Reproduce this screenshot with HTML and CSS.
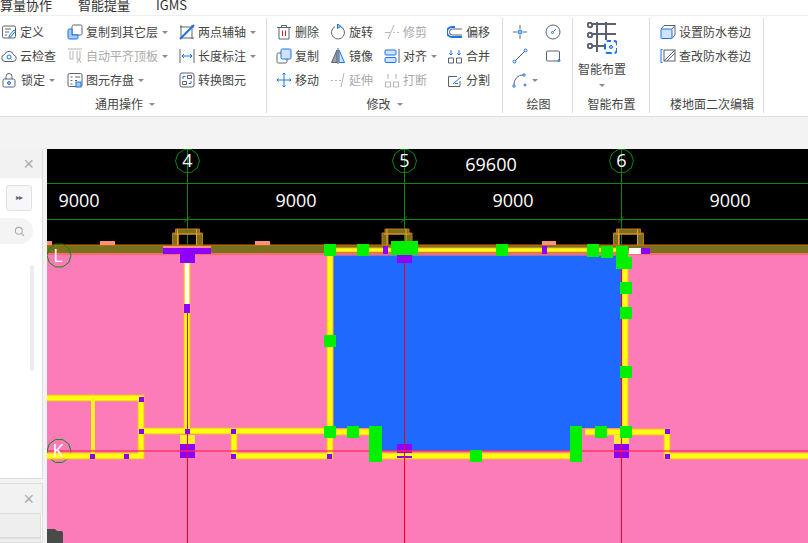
FILE: index.html
```html
<!DOCTYPE html>
<html lang="zh">
<head>
<meta charset="utf-8">
<title>IGMS</title>
<link rel="stylesheet" href="styles.css">
</head>
<body>
<header class="tabs"><span>算量协作</span><span>智能提量</span><span>IGMS</span></header>
<section class="ribbon">
  <div class="group g1">
    <div class="grid">
      <div class="tool"><svg class="ic" viewBox="0 0 16 16"><rect x="1.5" y="2" width="13" height="12" rx="1.5"/><path d="M4 5h6M4 8h4M4 11h2"/><path class="b" d="M8 12l5-6 1.5 1.2-5 6H8z"/></svg><span>定义</span></div>
      <div class="tool"><svg class="ic" viewBox="0 0 16 16"><rect x="5" y="1" width="10" height="10" rx="1.5"/><path class="fb" d="M1 6.5a1.5 1.5 0 0 1 1.500-1.500H5v6h6v2.500a1.500 1.500 0 0 1-1.500 1.500h-7A1.500 1.500 0 0 1 1 13.500z"/></svg><span>复制到其它层</span><i class="caret"></i></div>
      <div class="tool"><svg class="ic" viewBox="0 0 16 16"><path d="M2 1v13h13M1 3h14M13 1v14"/><path class="b thick" d="M1 15L15 1"/></svg><span>两点辅轴</span><i class="caret"></i></div>
      <div class="tool"><svg class="ic" viewBox="0 0 16 16"><path d="M4 13.500a3.500 3.500 0 0 1-.500-6.900 4.800 4.800 0 0 1 9.200 0.400A3.300 3.300 0 0 1 12 13.500z"/><circle class="b" cx="8" cy="9" r="2"/><path class="b" d="M9.500 10.500l1 1"/></svg><span>云检查</span></div>
      <div class="tool off"><svg class="ic" viewBox="0 0 16 16"><path d="M1 1h14M3 3v8h3V3M10 3v8h3V3"/><path d="M10 15l2-4 2 4"/></svg><span>自动平齐顶板</span><i class="caret"></i></div>
      <div class="tool"><svg class="ic" viewBox="0 0 16 16"><path d="M1 1v14"/><path class="b" d="M3 8h10M3 8l2-2M3 8l2 2M13 8l-2-2M13 8l-2 2"/><path d="M15 1v14"/></svg><span>长度标注</span><i class="caret"></i></div>
      <div class="tool"><svg class="ic" viewBox="0 0 16 16"><path d="M5 7V4.500a3 3 0 0 1 6 0V7"/><rect x="2" y="7" width="12" height="8" rx="1.500"/><circle class="fb" cx="8" cy="11" r="1.500"/></svg><span class="nudge">锁定</span><i class="caret"></i></div>
      <div class="tool"><svg class="ic" viewBox="0 0 16 16"><rect x="1" y="1.500" width="14" height="13" rx="1.500"/><path d="M3.500 5h2M8 5h5M3.500 8.500h2M8 8.500h2M3.500 12h2"/><rect class="fb" x="9" y="10" width="5" height="5"/></svg><span>图元存盘</span><i class="caret"></i></div>
      <div class="tool"><svg class="ic" viewBox="0 0 16 16"><rect x="1" y="1" width="14" height="14" rx="2"/><path d="M8.500 3.500h4v3h-4z"/><path d="M3.500 9.500h4v3h-4z"/><path class="b" d="M4 7V4.500h2.500M12 9v2.500H9.500"/></svg><span>转换图元</span></div>
    </div>
    <div class="label">通用操作<i class="caret wide"></i></div>
  </div>
  <div class="group g2">
    <div class="grid">
      <div class="tool"><svg class="ic" viewBox="0 0 16 16"><path d="M1 3.500h14M5.500 3.500V1.500h5v2M3 3.500V15h10V3.500"/><path class="r" d="M6.500 6.500v5.500M9.500 6.500v5.500"/></svg><span>删除</span></div>
      <div class="tool"><svg class="ic" viewBox="0 0 16 16"><path d="M10 2.300A6.500 6.500 0 1 1 5 2.700"/><path class="fb" d="M7.500 0v4.500L11 2.300z"/></svg><span>旋转</span></div>
      <div class="tool off"><svg class="ic" viewBox="0 0 16 16"><path d="M1 8.500h5M9.500 8.500h1.500M13 8.500h2M4 15L10 1"/></svg><span>修剪</span></div>
      <div class="tool"><svg class="ic" viewBox="0 0 16 16"><path class="b thick" d="M8 3H5a5 5 0 0 0 0 10h10"/><path d="M15 5H5.500a3 3 0 0 0 0 6H15"/></svg><span>偏移</span></div>
      <div class="tool"><svg class="ic" viewBox="0 0 16 16"><rect class="lb" x="5" y="1" width="10" height="10" rx="1.500"/><path d="M5 5H2.500A1.500 1.500 0 0 0 1 6.500v7A1.500 1.500 0 0 0 2.500 15h7a1.500 1.500 0 0 0 1.500-1.500V11"/></svg><span>复制</span></div>
      <div class="tool"><svg class="ic" viewBox="0 0 16 16"><path class="g" d="M7 2L1.500 14.500H7z"/><path class="lb" d="M9 2l5.500 12.500H9z"/><path d="M8 0v16"/></svg><span>镜像</span></div>
      <div class="tool align"><svg class="ic" viewBox="0 0 16 16"><rect class="lb" x="1" y="2" width="11" height="5" rx="1"/><rect class="lb" x="1" y="9.500" width="11" height="5" rx="1"/><path d="M15 1v14"/></svg><span>对齐</span><i class="caret"></i></div>
      <div class="tool"><svg class="ic" viewBox="0 0 16 16"><path d="M1.500 10h5v5h-5zM9.500 10h5v5h-5z"/><path class="b" d="M4 2v5M2.500 5.500L4 7l1.500-1.500M12 2v5M10.500 5.500L12 7l1.500-1.500"/></svg><span>合并</span></div>
      <div class="tool"><svg class="ic" viewBox="0 0 16 16"><path class="b" d="M8 1v14M1 8h14M6.500 2.500L8 1l1.500 1.500M6.500 13.500L8 15l1.500-1.500M2.500 6.500L1 8l1.500 1.500M13.500 6.500L15 8l-1.500 1.500"/></svg><span>移动</span></div>
      <div class="tool off"><svg class="ic" viewBox="0 0 16 16"><path d="M1 8.500h2M5 8.500h2M9 8.500h2M11 15l3-14"/></svg><span>延伸</span></div>
      <div class="tool off"><svg class="ic" viewBox="0 0 16 16"><path d="M1.500 10h5v5h-5zM9.500 10h5v5h-5zM4 2v5M12 2v5"/></svg><span>打断</span></div>
      <div class="tool"><svg class="ic" viewBox="0 0 16 16"><path d="M13 9v5.500H1.500V4.500H10"/><path class="b" d="M6 12l8-7M11 11.500h-3"/></svg><span>分割</span></div>
    </div>
    <div class="label">修改<i class="caret wide"></i></div>
  </div>
  <div class="group g3">
    <div class="grid">
      <div class="tool"><svg class="ic" viewBox="0 0 16 16"><path d="M1 8h4M11 8h4M8 1v4M8 11v4"/><circle class="fb" cx="8" cy="8" r="2"/></svg></div>
      <div class="tool"><svg class="ic" viewBox="0 0 16 16"><circle cx="8" cy="8" r="7"/><circle class="b" cx="7.500" cy="8.500" r="1"/><path class="b" d="M8.500 7.500L11 5"/></svg></div>
      <div class="tool"><svg class="ic" viewBox="0 0 16 16"><path d="M3 13L13 3"/><circle class="b" cx="2.500" cy="13.500" r="1.500"/><circle class="b" cx="13.500" cy="2.500" r="1.500"/></svg></div>
      <div class="tool"><svg class="ic" viewBox="0 0 16 16"><rect x="1.500" y="3" width="13" height="10" rx="1"/><circle class="b" cx="14" cy="12.500" r="1"/></svg></div>
      <div class="tool"><svg class="ic" viewBox="0 0 16 16"><path d="M2 13C2 7 6 3 11 3"/><circle class="b" cx="2" cy="14" r="1.200"/><circle class="b" cx="12" cy="3" r="1.200"/><circle class="b" cx="13" cy="13" r="1"/></svg><i class="caret"></i></div>
    </div>
    <div class="label">绘图</div>
  </div>
  <div class="group g4">
    <div class="big">
      <svg class="ic large" viewBox="0 0 30 32"><path class="thick" d="M5 2h24M5 12h24M5 24h12M10 0v30M19 0v18"/><circle class="thick w" cx="3" cy="3" r="2.200"/><circle class="thick w" cx="3" cy="13" r="2.200"/><circle class="thick w" cx="3" cy="24" r="2.200"/><rect class="b dash" x="18" y="19" width="12" height="12" rx="3"/><circle class="fb" cx="24" cy="25" r="1.500"/></svg>
      <span>智能布置</span>
      <i class="caret"></i>
    </div>
    <div class="label">智能布置</div>
  </div>
  <div class="group g5">
    <div class="stack">
      <div class="tool"><svg class="ic" viewBox="0 0 16 16"><path d="M1 5l3-3.500h11V11l-3 3.500"/><path d="M12 5l3-3.500"/><rect class="lb" x="1" y="5" width="11" height="9.500" rx="1"/></svg><span>设置防水卷边</span></div>
      <div class="tool"><svg class="ic" viewBox="0 0 16 16"><path class="b" d="M2.500 1.500H1v13h1.500"/><rect x="4" y="2" width="11" height="11"/><path d="M4 13L15 2M7 13l8-8"/></svg><span>查改防水卷边</span></div>
    </div>
    <div class="label">楼地面二次编辑</div>
  </div>
</section>
<div class="strip"></div>
<main class="work">
  <aside class="side">
    <div class="panel top-panel">
      <div class="phead"><span class="close">×</span></div>
      <div class="expand">▸▸</div>
      <div class="search"><svg class="ic search-ic" viewBox="0 0 16 16"><circle cx="7" cy="7" r="5"/><path d="M11 11l3.500 3.500"/></svg></div>
      <div class="scroll"></div>
    </div>
    <div class="panel low-panel">
      <div class="phead"><span class="close">×</span></div>
      <div class="row"></div>
      <div class="row"></div>
    </div>
  </aside>
  <svg class="canvas" viewBox="47 149 761 394">
    <defs>
      <polygon id="oct" points="12,0 9.700,7 3.700,11.400 -3.700,11.400 -9.700,7 -12,0 -9.700,-7 -3.700,-11.400 3.700,-11.400 9.700,-7"/>
      <g id="frame">
        <path class="frame-out" d="M-15 17v-12h3v-4h24v4h3v12h-6v-11h-18v11z"/>
        <path class="frame-in" d="M-10 1v16M9 1v16M-13 6h26"/>
      </g>
      <path id="wallpath" d="M330 250V456H234V431H141M47 456H141V398H47M141 431H330M187 262V431M625 250V432H667V456H808M570 456H382M330 432H370M585 432H625M404 456H570"/>
    </defs>
    <rect class="black" x="47" y="149" width="761" height="96"/>
    <rect class="pink" x="47" y="254" width="761" height="289"/>
    <rect class="olive" x="47" y="245" width="761" height="8.500"/>
    <path class="orange-l" d="M47 245H808"/>
    <path class="red-l" d="M47 254H808"/>
    <rect class="salmon" x="47" y="241" width="5" height="4"/>
    <rect class="salmon" x="100" y="241" width="15" height="4"/>
    <rect class="salmon" x="255" y="241" width="15" height="4"/>
    <rect class="salmon" x="542" y="241" width="14" height="4"/>
    <path class="g-l" d="M47 183.500H808M47 219.500H808M187.500 149V245M404.500 149V245M621.500 149V245M184 222.500l6-6M401 222.500l6-6M618 222.500l6-6"/>
    <use href="#oct" class="oct" x="187.500" y="161"/>
    <use href="#oct" class="oct" x="404.500" y="161"/>
    <use href="#oct" class="oct" x="621.500" y="161"/>
    <use href="#oct" class="oct" x="59" y="255.500"/>
    <use href="#oct" class="oct" x="59" y="451"/>
    <use href="#frame" x="187.500" y="228"/>
    <use href="#frame" x="397" y="228"/>
    <use href="#frame" x="628.500" y="228"/>
    <path class="blue" d="M333 255.500H621.500V428H582V451H382V428H333z"/>
    <rect class="salmon" x="163" y="246" width="48" height="2"/>
    <rect class="purple" x="163" y="248" width="48" height="6"/>
    <path class="top-o" d="M330 250H625"/>
    <path class="top-y" d="M330 250H625"/>
    <use href="#wallpath" class="wall-o"/>
    <use href="#wallpath" class="wall-y"/>
    <path class="wall-thin" d="M93 398V456"/>
    <rect class="yel" x="180" y="435" width="15" height="9"/>
    <rect class="yel" x="614" y="435" width="15" height="9"/>
    <rect class="purple" x="180" y="254" width="15" height="9"/>
    <rect class="purple" x="397" y="255" width="15" height="8"/>
    <rect class="white" x="629" y="248" width="12" height="6"/>
    <rect class="purple" x="641" y="248" width="9" height="6"/>
    <path class="red-v" d="M187.500 263V543M404.500 263V543M621.500 263V543"/>
    <path class="wall-white" d="M187 263V304"/>
    <rect class="purple" x="180" y="444" width="15" height="14"/>
    <rect class="purple" x="397" y="444" width="15" height="9"/>
    <rect class="purple" x="397" y="456" width="15" height="2"/>
    <rect class="purple" x="614" y="444" width="15" height="14"/>
    <path class="red-v" d="M187.500 444V543M404.500 444V543M621.500 444V543"/>
    <path class="red-h" d="M47 451H808"/>
    <g class="purple">
      <rect x="184" y="304" width="6" height="9"/>
      <rect x="139" y="397" width="5" height="5"/>
      <rect x="139" y="429" width="5" height="5"/>
      <rect x="185" y="429" width="5" height="5"/>
      <rect x="231" y="429" width="5" height="5"/>
      <rect x="231" y="454" width="5" height="5"/>
      <rect x="90" y="454" width="5" height="5"/>
      <rect x="124" y="454" width="5" height="5"/>
      <rect x="327" y="454" width="5" height="5"/>
      <rect x="665" y="429" width="5" height="5"/>
      <rect x="665" y="454" width="5" height="5"/>
      <rect x="383" y="246" width="5" height="8"/>
      <rect x="542" y="246" width="5" height="8"/>
    </g>
    <g class="green">
      <rect x="324" y="244" width="12" height="12"/>
      <rect x="357" y="244" width="12" height="12"/>
      <rect x="391" y="241" width="27" height="14"/>
      <rect x="496" y="244" width="12" height="12"/>
      <rect x="587" y="244" width="12" height="13"/>
      <rect x="601" y="246" width="12" height="12"/>
      <rect x="616" y="246" width="12" height="12"/>
      <rect x="616" y="257" width="16" height="12"/>
      <rect x="620" y="282" width="12" height="12"/>
      <rect x="620" y="307" width="12" height="12"/>
      <rect x="620" y="366" width="12" height="12"/>
      <rect x="620" y="426" width="12" height="12"/>
      <rect x="324" y="335" width="12" height="12"/>
      <rect x="324" y="426" width="12" height="12"/>
      <rect x="347" y="426" width="12" height="12"/>
      <rect x="369" y="426" width="13" height="36"/>
      <rect x="470" y="450" width="12" height="12"/>
      <rect x="570" y="426" width="12" height="36"/>
      <rect x="595" y="426" width="12" height="12"/>
    </g>
    <path class="dark" d="M47 529h8l2 2h5l1 2v10H47z"/>
    <g class="dim">
      <text x="79" y="207">9000</text>
      <text x="296" y="207">9000</text>
      <text x="513" y="207">9000</text>
      <text x="730" y="207">9000</text>
      <text x="491" y="171">69600</text>
      <text x="187.500" y="167">4</text>
      <text x="404.500" y="167">5</text>
      <text x="621.500" y="167">6</text>
      <text x="58" y="262">L</text>
      <text x="58" y="457">K</text>
    </g>
  </svg>
</main>
</body>
</html>
```
FILE: styles.css
```css
* { box-sizing: border-box; }
html, body { margin: 0; padding: 0; }
body {
  width: 808px;
  height: 543px;
  overflow: hidden;
  display: flex;
  flex-direction: column;
  background: #fff;
  color: #444;
  font: 12px/16px "Noto Sans CJK SC", "Liberation Sans", sans-serif;
}
.tabs {
  height: 16px;
  display: flex;
  align-items: flex-start;
  gap: 26px;
  overflow: hidden;
  font-size: 13px;
  line-height: 10px;
  border-bottom: 1px solid #eee;
  color: #333;
}
.ribbon {
  height: 101px;
  display: flex;
  background: #fff;
  border-bottom: 1px solid #ddd;
}
.group {
  height: 100%;
  padding-top: 4px;
  display: flex;
  flex-direction: column;
  position: relative;
}
.group::after {
  content: "";
  position: absolute;
  right: 0;
  top: 2px;
  bottom: 3px;
  width: 1px;
  background: #ddd;
}
.g1 { width: 267px; }
.g2 { width: 236px; padding-left: 9px; }
.g3 { width: 70px; padding-left: 9px; }
.g4 { width: 77px; }
.g5 { width: 114px; padding-left: 10px; }
.grid { display: grid; height: 72px; grid-auto-rows: 24px; }
.g1 .grid { grid-template-columns: 66px 112px 88px; padding-left: 1px; }
.g2 .grid { grid-template-columns: 54px 54px 63px 60px; }
.g3 .grid { grid-template-columns: 33px 33px; }
.stack { height: 72px; display: grid; grid-auto-rows: 24px; }
.tool { display: flex; align-items: center; gap: 3px; white-space: nowrap; }
.tool.off { color: #aaa; }
.tool.off .ic, .tool.off .ic .b { stroke: #b4b4b4; }
.nudge { margin-left: 1px; }
.caret {
  width: 0;
  height: 0;
  margin-left: 1px;
  border-left: 3px solid transparent;
  border-right: 3px solid transparent;
  border-top: 3px solid #8a8a8a;
}
.caret.wide { border-left-width: 3.500px; border-right-width: 3.500px; margin-left: 6px; }
.label {
  height: 24px;
  display: flex;
  align-items: center;
  justify-content: center;
}
.g1 .label { padding-right: 17px; }
.g2 .label { padding-right: 10px; }
.g3 .label { padding-right: 8px; }
.big {
  height: 72px;
  display: flex;
  flex-direction: column;
  align-items: center;
  padding-top: 2px;
  padding-right: 19px;
  padding-left: 0;
}
.big span { margin-top: 7px; line-height: 16px; }
.big .caret { margin: 7px 0 0; }
.ic {
  width: 16px;
  height: 16px;
  flex: none;
  fill: none;
  stroke: #5a6270;
  stroke-width: 1;
}
.ic .b { stroke: #1a73e8; }
.ic .fb { fill: #a9c9f5; stroke: #1a73e8; }
.ic .lb { fill: #cfe2fb; stroke: #1a73e8; }
.ic .g { fill: #9aa1ab; }
.ic .r { stroke: #e02020; }
.ic .w { fill: #fff; }
.ic .thick { stroke-width: 2; }
.ic .dash { stroke-width: 2; stroke-dasharray: 6 2.800; stroke-dashoffset: 3; }
.ic.large { width: 30px; height: 32px; }
.strip { height: 32px; background: #f3f3f3; }
.work { flex: 1; display: flex; min-height: 0; background: #f3f3f3; }
.side {
  width: 47px;
  flex: none;
  padding-right: 4px;
  display: flex;
  flex-direction: column;
  gap: 4px;
}
.panel {
  background: #fff;
  border-right: 1px solid #ddd;
  border-bottom: 1px solid #ddd;
  position: relative;
  overflow: hidden;
}
.top-panel { height: 330px; }
.low-panel { flex: 1; border-top: 1px solid #ddd; }
.phead {
  height: 29px;
  background: #f2f2f2;
  display: flex;
  justify-content: flex-end;
  align-items: center;
  padding-right: 8px;
}
.close { color: #aaa; font-size: 18px; line-height: 20px; font-family: "Liberation Sans", sans-serif; }
.expand {
  width: 26px;
  height: 26px;
  margin: 7px 0 0 6px;
  border: 1px solid #e2e2e2;
  border-radius: 3px;
  background: #f7f7f9;
  color: #667;
  font: 8px/24px "DejaVu Sans", sans-serif;
  letter-spacing: -1px;
  text-align: center;
}
.search {
  width: 33px;
  height: 26px;
  margin-top: 7px;
  background: #f4f4f4;
  border-radius: 0 13px 13px 0;
  display: flex;
  align-items: center;
  justify-content: flex-end;
  padding-right: 8px;
}
.search-ic { width: 11px; height: 11px; stroke: #aaa; stroke-width: 1.500; }
.scroll {
  position: absolute;
  left: 30px;
  top: 116px;
  width: 4px;
  height: 106px;
  background: #ececec;
  border-radius: 2px;
}
.row { height: 25px; background: #eee; border: 1px solid #ddd; margin-right: 1px; border-left: 0; }
.canvas { flex: none; width: 761px; height: 394px; display: block; }
.black { fill: #000; }
.pink { fill: #fb7cb8; }
.olive { fill: #78701a; }
.orange-l { stroke: #d96a00; stroke-width: 1.200; }
.red-l { stroke: #ff6a70; stroke-width: 2; }
.salmon { fill: #ff8f80; }
.g-l { stroke: #0a8a0a; stroke-width: 1; fill: none; }
.oct { fill: none; stroke: #0a8a0a; stroke-width: 1; }
.frame-out { fill: #78701a; stroke: #c9701a; stroke-width: 1; }
.frame-in { fill: none; stroke: #e8a030; stroke-width: 1; }
.blue { fill: #1f69ff; }
.purple { fill: #8f00ff; }
.top-o { fill: none; stroke: #ffb030; stroke-width: 5; }
.top-y { fill: none; stroke: #ffff10; stroke-width: 3; }
.wall-o { fill: none; stroke: #ffb030; stroke-width: 7; }
.wall-y { fill: none; stroke: #ffff10; stroke-width: 5; }
.wall-white { fill: none; stroke: #fff; stroke-width: 4; }
.wall-thin { fill: none; stroke: #ffee20; stroke-width: 4; }
.yel { fill: #ffee30; }
.white { fill: #fff; }
.red-v { stroke: #f5001e; stroke-width: 1; fill: none; }
.red-h { stroke: #ff2a5a; stroke-width: 1.500; stroke-opacity: .85; fill: none; }
.green { fill: #00f000; }
.dark { fill: #4a4a4a; }
.dim text {
  fill: #fff;
  font: 18px "Open Sans", sans-serif;
  text-anchor: middle;
}
```
